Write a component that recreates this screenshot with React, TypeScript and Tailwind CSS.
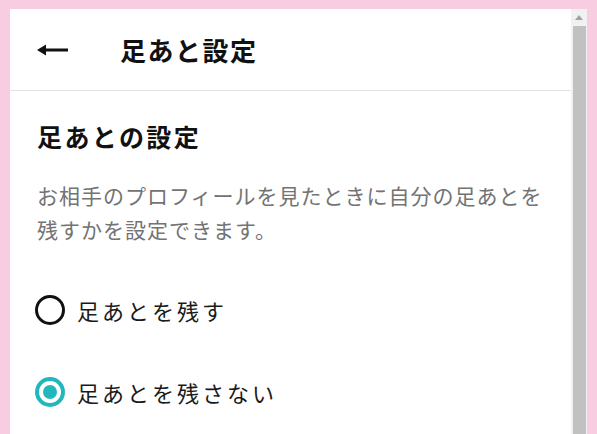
import { FC, useState } from "react";

const font = { fontFamily: '"Noto Sans CJK JP", "Noto Sans", sans-serif' };

const Radio: FC<{ checked: boolean; label: string; onClick: () => void }> = ({
  checked,
  label,
  onClick,
}) => (
  <button
    type="button"
    onClick={onClick}
    className="flex items-center gap-[12px] h-[40px] -ml-[2px] text-left"
  >
    {checked ? (
      <span className="w-[30px] h-[30px] rounded-full border-[4px] border-[#22b8bb] flex items-center justify-center">
        <span className="w-[14px] h-[14px] rounded-full bg-[#22b8bb]" />
      </span>
    ) : (
      <span className="w-[30px] h-[30px] rounded-full border-[3px] border-[#111]" />
    )}
    <span className="text-[22px] tracking-[3px] text-[#1a1a1a]">{label}</span>
  </button>
);

export default function App() {
  const [leave, setLeave] = useState(false);

  return (
    <div
      className="w-[597px] h-[434px] overflow-hidden bg-[#f8cce1] pt-[9px] px-[10px]"
      style={font}
    >
      <div className="flex h-[425px] bg-white">
        <div className="flex-1 flex flex-col">
          {/* header */}
          <div className="h-[82px] flex items-center border-b border-[#e3e3e3]">
            <div className="w-[110px] pl-[27px]">
              <svg width="31" height="14" viewBox="0 0 31 14">
                <path d="M0 7 L9 1.5 L9 12.5 Z" fill="#111" />
                <rect x="6" y="5.5" width="25" height="3" fill="#111" />
              </svg>
            </div>
            <h1 className="text-[26px] font-bold tracking-[1.5px] text-[#111]">
              足あと設定
            </h1>
          </div>

          {/* body */}
          <div className="px-[27px] pt-[27px]">
            <h2 className="text-[25px] font-bold tracking-[2.4px] text-[#111] leading-[36px]">
              足あとの設定
            </h2>
            <p className="mt-[24px] text-[21px] leading-[34px] tracking-[1px] text-[#737373]">
              お相手のプロフィールを見たときに自分の足あとを残すかを設定できます。
            </p>
            <div className="mt-[44px] flex flex-col gap-[42px]">
              <Radio
                checked={leave}
                label="足あとを残す"
                onClick={() => setLeave(true)}
              />
              <Radio
                checked={!leave}
                label="足あとを残さない"
                onClick={() => setLeave(false)}
              />
            </div>
          </div>
        </div>

        {/* scrollbar */}
        <div className="w-[16px] bg-[#f1f1f1] flex flex-col items-center">
          <div className="h-[17px] flex items-center justify-center">
            <svg width="8" height="5" viewBox="0 0 8 5">
              <path d="M0 5 L4 0 L8 5 Z" fill="#a3a3a3" />
            </svg>
          </div>
          <div className="flex-1 w-[13px] bg-[#c1c1c1]" />
        </div>
      </div>
    </div>
  );
}
